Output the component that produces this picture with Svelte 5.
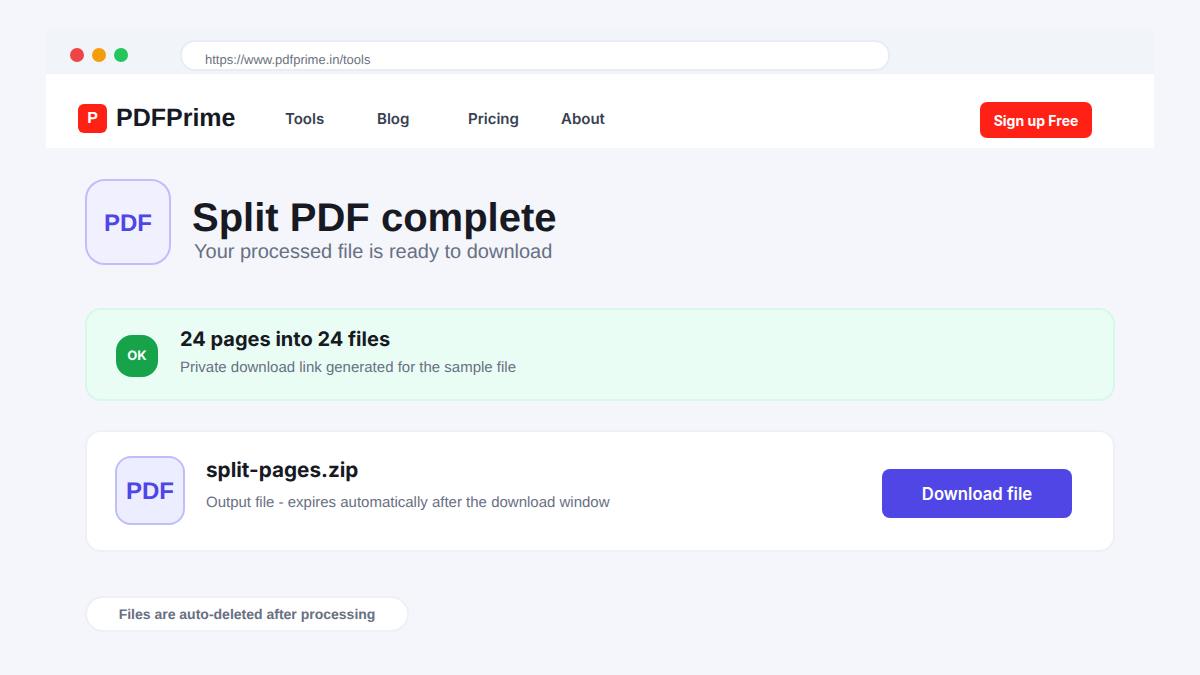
<script>
  const navLinks = ['Tools', 'Blog', 'Pricing', 'About'];
</script>

<div class="page">
  <div class="browser">
    <div class="chrome">
      <div class="dots">
        <span class="dot red"></span>
        <span class="dot amber"></span>
        <span class="dot green"></span>
      </div>
      <div class="url">https://www.pdfprime.in/tools</div>
    </div>
    <header class="nav">
      <div class="brand">
        <span class="logo">P</span>
        <span class="brand-name">PDFPrime</span>
      </div>
      <nav class="links">
        {#each navLinks as link}
          <a href="#top">{link}</a>
        {/each}
      </nav>
      <button class="signup">Sign up Free</button>
    </header>
  </div>

  <main class="content">
    <section class="hero">
      <div class="pdf-badge large">PDF</div>
      <div class="hero-text">
        <h1>Split PDF complete</h1>
        <p>Your processed file is ready to download</p>
      </div>
    </section>

    <section class="status">
      <div class="ok">OK</div>
      <div class="status-text">
        <h2>24 pages into 24 files</h2>
        <p>Private download link generated for the sample file</p>
      </div>
    </section>

    <section class="file">
      <div class="pdf-badge small">PDF</div>
      <div class="file-text">
        <h2>split-pages.zip</h2>
        <p>Output file - expires automatically after the download window</p>
      </div>
      <button class="download">Download file</button>
    </section>

    <div class="note">Files are auto-deleted after processing</div>
  </main>
</div>

<style>
  :global(body) {
    margin: 0;
    background: #f4f6fb;
  }

  .page {
    width: 1200px;
    height: 675px;
    overflow: hidden;
    box-sizing: border-box;
    padding-top: 28px;
    background: #f4f6fb;
    font-family: "Liberation Sans", Arial, sans-serif;
    color: #171923;
    text-rendering: geometricPrecision;
  }

  .browser {
    margin: 0 46px;
  }

  .chrome {
    height: 46px;
    display: flex;
    background: #f1f4f9;
    box-sizing: border-box;
    padding: 12px 0 0 24px;
  }

  .dots {
    display: flex;
    gap: 8px;
    padding-top: 8px;
    width: 110px;
  }

  .dot {
    width: 14px;
    height: 14px;
    border-radius: 50%;
  }

  .red { background: #ef4444; }
  .amber { background: #f59e0b; }
  .green { background: #22c55e; }

  .url {
    width: 710px;
    height: 31px;
    box-sizing: border-box;
    padding: 10px 0 0 23px;
    background: #fff;
    border: 2px solid #e9ecf4;
    border-radius: 15px;
    font-size: 13px;
    line-height: 16px;
    color: #6b7280;
  }

  .nav {
    height: 74px;
    box-sizing: border-box;
    display: flex;
    align-items: center;
    background: #fff;
    padding: 14px 0 0 32px;
  }

  .brand {
    display: flex;
    align-items: center;
    gap: 9px;
    width: 207px;
  }

  .logo {
    width: 29px;
    height: 29px;
    border-radius: 6px;
    background: #ff2116;
    color: #fff;
    font-size: 16px;
    font-weight: 700;
    text-align: center;
    line-height: 29px;
  }

  .brand-name {
    font-size: 25px;
    font-weight: 700;
    color: #171923;
  }

  .links {
    display: grid;
    grid-template-columns: 92px 91px 93px 90px;
    width: 695px;
  }

  .links a {
    font-family: Inter, sans-serif;
    font-size: 15px;
    font-weight: 600;
    color: #374151;
    text-decoration: none;
  }

  .signup {
    width: 112px;
    height: 36px;
    margin-top: 4px;
    padding: 0;
    border: 0;
    border-radius: 7px;
    background: #ff2116;
    color: #fff;
    font-family: Inter, sans-serif;
    font-size: 14px;
    font-weight: 700;
  }

  .content {
    padding: 31px 85px 0 85px;
    display: flex;
    flex-direction: column;
  }

  .hero {
    display: flex;
    align-items: center;
    gap: 21px;
    height: 86px;
  }

  .pdf-badge {
    display: flex;
    align-items: center;
    justify-content: center;
    box-sizing: border-box;
    border: 2px solid #c0bdfc;
    color: #4f46e5;
    font-weight: 700;
    flex: none;
  }

  .large {
    width: 86px;
    height: 86px;
    padding-top: 4px;
    border-radius: 20px;
    font-size: 24px;
    background: #f0f0ff;
  }

  .small {
    width: 70px;
    height: 69px;
    padding-top: 3px;
    border-radius: 16px;
    font-size: 24px;
    margin: 0 21px 1px 0;
    background: #ecedfe;
  }

  .hero-text {
    padding-top: 14px;
  }

  .hero-text h1 {
    margin: 0;
    font-size: 40px;
    line-height: 46px;
    font-weight: 700;
    color: #171923;
  }

  .hero-text p {
    margin: 0 0 0 2px;
    font-size: 20px;
    line-height: 22px;
    color: #687083;
  }

  .status {
    margin-top: 43px;
    height: 93px;
    box-sizing: border-box;
    display: flex;
    align-items: center;
    gap: 22px;
    padding-left: 29px;
    background: #eafdf5;
    border: 2px solid #d6f8e6;
    border-radius: 16px;
  }

  .ok {
    width: 42px;
    height: 42px;
    margin-top: 2px;
    border-radius: 16px;
    background: #16a34a;
    color: #fff;
    font-family: Inter, sans-serif;
    font-size: 13px;
    font-weight: 700;
    text-align: center;
    line-height: 43px;
  }

  .status-text {
    margin-bottom: 6px;
  }

  h2 {
    margin: 0;
    font-family: Inter, sans-serif;
    font-size: 20px;
    font-weight: 700;
    line-height: 24px;
    color: #171923;
  }

  .status p {
    margin: 8px 0 0;
    font-size: 15px;
    line-height: 18px;
    color: #687083;
  }

  .file {
    margin-top: 29px;
    height: 122px;
    box-sizing: border-box;
    display: flex;
    align-items: center;
    padding: 0 41px 0 28px;
    background: #fff;
    border: 2px solid #eef0f6;
    border-radius: 16px;
  }

  .file-text {
    flex: 1;
    margin-bottom: 12px;
  }

  .file-text h2 {
    font-size: 20.7px;
  }

  .file-text p {
    margin: 12px 0 0;
    font-size: 15px;
    line-height: 18px;
    color: #687083;
  }

  .download {
    width: 190px;
    height: 49px;
    margin-top: 4px;
    padding: 2px 0 0;
    border: 0;
    border-radius: 8px;
    background: #4f46e5;
    color: #fff;
    font-family: Inter, sans-serif;
    font-size: 16.7px;
    font-weight: 600;
  }

  .note {
    margin-top: 44px;
    width: 324px;
    height: 36px;
    box-sizing: border-box;
    border: 2px solid #eef0f6;
    border-radius: 18px;
    background: #fff;
    font-size: 14px;
    font-weight: 700;
    line-height: 32px;
    text-align: center;
    color: #687083;
  }
</style>
